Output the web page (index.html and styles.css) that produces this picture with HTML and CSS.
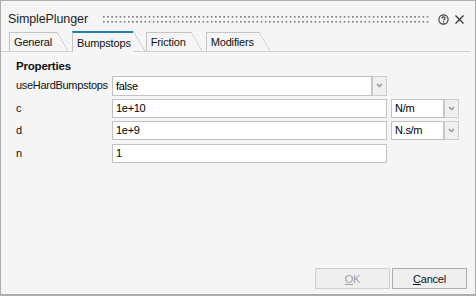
FILE: index.html
```html
<!DOCTYPE html>
<html lang="en">
<head>
  <meta charset="UTF-8" />
  <title>SimplePlunger</title>
  <link rel="stylesheet" href="styles.css">
</head>
<body>
  <div class="dialog">
    <!-- Title Bar -->
    <div class="titlebar">
      <span class="title">SimplePlunger</span>
      <svg class="grip" height="8">
        <defs>
          <pattern id="dots" width="4.15" height="5" patternUnits="userSpaceOnUse">
            <rect x="0" y="1" width="1.6" height="1.6" fill="#7a7a7a" />
          </pattern>
        </defs>
        <rect width="100%" height="8" fill="url(#dots)" />
      </svg>
      <svg class="help-icon" width="11" height="11" viewBox="0 0 11 11">
        <circle cx="5.5" cy="5.5" r="4.6" fill="none" stroke="#333" stroke-width="1.1" />
        <path d="M3.9 4.4 C3.9 3.4 4.6 2.9 5.5 2.9 C6.4 2.9 7.1 3.4 7.1 4.3 C7.1 5.3 5.6 5.4 5.6 6.6" fill="none" stroke="#333" stroke-width="1.1" />
        <rect x="5" y="7.4" width="1.2" height="1.2" fill="#333" />
      </svg>
      <svg class="close-icon" width="9" height="9" viewBox="0 0 9 9">
        <path d="M0.5 0.5 L8.5 8.5 M8.5 0.5 L0.5 8.5" stroke="#333" stroke-width="1.2" />
      </svg>
    </div>

    <!-- Tabs -->
    <div class="tabs">
      <div class="tab">General</div>
      <div class="tab active">Bumpstops</div>
      <div class="tab">Friction</div>
      <div class="tab">Modifiers</div>
    </div>

    <!-- Properties Panel -->
    <div class="panel">
      <h3>Properties</h3>
      <div class="prop-grid">
        <label>useHardBumpstops</label>
        <div class="combo wide">
          <div class="field">false</div>
          <div class="drop"><svg width="7" height="5" viewBox="0 0 7 5"><polyline points="1,1 3.5,3.5 6,1" fill="none" stroke="#939393" stroke-width="1.4" /></svg></div>
        </div>
        <div></div>

        <label>c</label>
        <div class="field">1e+10</div>
        <div class="combo">
          <div class="field">N/m</div>
          <div class="drop"><svg width="7" height="5" viewBox="0 0 7 5"><polyline points="1,1 3.5,3.5 6,1" fill="none" stroke="#939393" stroke-width="1.4" /></svg></div>
        </div>

        <label>d</label>
        <div class="field">1e+9</div>
        <div class="combo">
          <div class="field">N.s/m</div>
          <div class="drop"><svg width="7" height="5" viewBox="0 0 7 5"><polyline points="1,1 3.5,3.5 6,1" fill="none" stroke="#939393" stroke-width="1.4" /></svg></div>
        </div>

        <label>n</label>
        <div class="field">1</div>
        <div></div>
      </div>
    </div>

    <!-- Footer Buttons -->
    <div class="footer">
      <button class="btn disabled"><u>O</u>K</button>
      <button class="btn"><u>C</u>ancel</button>
    </div>
  </div>
</body>
</html>
```

FILE: styles.css
```css
/* Global Styles */
* {
  margin: 0;
  padding: 0;
  box-sizing: border-box;
}
body {
  font-family: 'Liberation Sans', Arial, sans-serif;
  font-size: 11px;
  letter-spacing: -0.3px;
  color: #111;
  background: #f5f5f5;
}

/* Dialog Frame */
.dialog {
  width: 476px;
  height: 296px;
  border: 1px solid #adadad;
  border-bottom-width: 2px;
  background: #f5f5f5;
  display: flex;
  flex-direction: column;
}

/* Title Bar */
.titlebar {
  display: flex;
  align-items: center;
  height: 30px;
  padding: 10px 11px 4px 7px;
}
.title {
  font-size: 12.5px;
  letter-spacing: -0.1px;
  color: #1e1e1e;
  line-height: 16px;
}
.grip {
  flex: 1;
  margin: 0 9px 0 15px;
}
.help-icon {
  margin-right: 6px;
}

/* Tabs */
.tabs {
  display: flex;
  align-items: flex-end;
  height: 21px;
  margin: 0 5px 0 0;
  padding-left: 8px;
  border-bottom: 1px solid #d2d2d2;
}
.tab {
  position: relative;
  height: 19px;
  line-height: 18px;
  padding: 0 5px 0 4px;
  margin-right: 15px;
  border-left: 1px solid #c4c4c4;
  border-top: 1px solid #c4c4c4;
  color: #111;
  letter-spacing: -0.15px;
}
.tab::after {
  content: "";
  position: absolute;
  top: -1px;
  left: 100%;
  width: 11px;
  height: calc(100% + 1px);
  background: linear-gradient(to top right, transparent calc(50% - 0.6px), #c4c4c4 50%, transparent calc(50% + 0.6px));
}
.tab.active {
  height: 21px;
  margin-bottom: -1px;
  line-height: 20px;
  padding-right: 2px;
  margin-right: 13px;
  border-top: 2px solid #1c7fb5;
  background: #f5f5f5;
  z-index: 1;
}
.tab.active::after {
  top: -2px;
  height: calc(100% + 1px);
  width: 12px;
}

/* Properties Panel */
.panel {
  padding: 6px 0 0 15px;
}
.panel h3 {
  font-size: 11.5px;
  letter-spacing: -0.2px;
  line-height: 16px;
  margin-bottom: 2px;
}
.prop-grid {
  display: grid;
  grid-template-columns: 92px 275px 68px;
  grid-auto-rows: 19px;
  column-gap: 4px;
  row-gap: 3.5px;
  align-items: center;
}
.prop-grid label {
  line-height: 19px;
  color: #111;
  white-space: nowrap;
}
.field {
  height: 19px;
  line-height: 17px;
  padding-left: 3px;
  background: #fff;
  border: 1px solid #c2c2c2;
  color: #000;
  overflow: hidden;
  white-space: nowrap;
}
.combo {
  display: flex;
  height: 19px;
}
.combo.wide {
  height: 20px;
}
.combo.wide .field {
  height: 20px;
  line-height: 18px;
}
.combo .field {
  flex: 1;
}
.drop {
  width: 15px;
  display: flex;
  align-items: center;
  justify-content: center;
  border: 1px solid #cdcdcd;
  background: #f0f0f0;
}

/* Footer Buttons */
.footer {
  margin-top: auto;
  display: flex;
  justify-content: flex-end;
  gap: 2px;
  padding: 0 8px 5px 0;
}
.btn {
  width: 75px;
  height: 21px;
  font-family: inherit;
  font-size: 11px;
  letter-spacing: -0.2px;
  color: #111;
  background: #efefef;
  border: 1px solid #adadad;
}
.btn.disabled {
  color: #a2a2a2;
  border-color: #cfcfcf;
}
```
